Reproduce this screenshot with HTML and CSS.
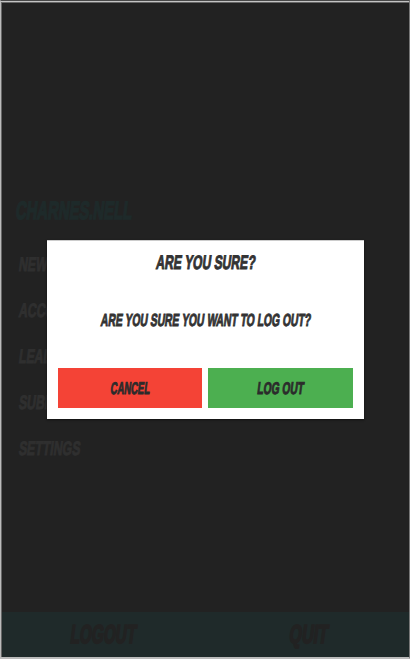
FILE: index.html
```
<!DOCTYPE html>
<html lang="en">
<head>
<meta charset="utf-8">
<title>Log out</title>
<link rel="stylesheet" href="styles.css">
</head>
<body>
<div class="window">
  <main class="menu">
    <h1 class="user"><span class="t t-user">CHARNES.NELL</span></h1>
    <ul class="items">
      <li><span class="t t-item">NEW GAME</span></li>
      <li><span class="t t-item">ACCOUNT</span></li>
      <li><span class="t t-item">LEADERS</span></li>
      <li><span class="t t-item">SUBMIT</span></li>
      <li><span class="t t-item">SETTINGS</span></li>
    </ul>
  </main>
  <footer class="bar">
    <div class="action"><span class="t t-logout">LOGOUT</span></div>
    <div class="action"><span class="t t-quit">QUIT</span></div>
  </footer>
</div>
<div class="dialog" role="dialog">
  <h2 class="title"><span class="t t-title">ARE YOU SURE?</span></h2>
  <p class="message"><span class="t t-message">ARE YOU SURE YOU WANT TO LOG OUT?</span></p>
  <div class="buttons">
    <button class="btn cancel"><span class="t t-cancel">CANCEL</span></button>
    <button class="btn confirm"><span class="t t-confirm">LOG OUT</span></button>
  </div>
</div>
</body>
</html>
```
FILE: styles.css
```
* { box-sizing: border-box; margin: 0; padding: 0; }
body {
  width: 410px;
  height: 659px;
  overflow: hidden;
  background: #222;
  font-family: "Liberation Sans", sans-serif;
  font-weight: 700;
}
.window {
  height: 659px;
  display: flex;
  flex-direction: column;
  border: solid;
  border-width: 1px 1px 2px 1px;
  border-color: #484848 #777 #bbb #bbb;
  box-shadow: inset 0 1px #c4c4c4, inset 1px 0 #666, inset 0 2px #666;
}
.menu { flex: 1; padding: 194px 0 0 15px; }
.user { height: 31px; display: flex; align-items: center; color: #1e2a2a; }
.items { list-style: none; padding: 16px 0 0 3px; }
.items li { height: 46px; display: flex; align-items: center; color: #2f2f2f; }
.bar { height: 45px; margin-left: 1px; padding-bottom: 1px; display: flex; background: #1f2a2a; color: #222; }
.action { flex: 1; display: flex; align-items: center; justify-content: center; }
.dialog {
  position: absolute;
  left: 47px;
  top: 240px;
  width: 317px;
  height: 179px;
  padding: 0 11px 11px;
  display: flex;
  flex-direction: column;
  background: #fff;
  border-top: 1px solid #ccc;
  box-shadow: 0 1px 2px #111;
  color: #333;
}
.title { height: 43px; display: flex; align-items: center; justify-content: center; }
.message { height: 74px; display: flex; align-items: center; justify-content: center; }
.buttons { display: grid; grid-template-columns: 144px 145px; gap: 6px; height: 40px; margin-top: auto; }
.btn { min-width: 0; border: 0; display: flex; align-items: center; justify-content: center; font: inherit; color: #2b2b2b; }
.cancel { background: #f44336; }
.confirm { background: #4caf50; }
.t { display: block; flex: none; white-space: nowrap; line-height: 1; -webkit-text-stroke: 1px currentColor; }
.t-user { font-size: 25px; transform-origin: left; transform: scaleX(0.595) skewX(-12deg); -webkit-text-stroke-width: 1.6px; }
.t-item { font-size: 19.5px; transform-origin: left; transform: scaleX(0.63) skewX(-12deg); }
.t-logout { font-size: 26px; transform: scaleX(0.59) skewX(-12deg); -webkit-text-stroke-width: 1.8px; }
.t-quit { font-size: 26px; transform: translateX(2px) scaleX(0.62) skewX(-12deg); -webkit-text-stroke-width: 1.8px; }
.t-title { font-size: 19.5px; transform: scaleX(0.62) skewX(-12deg); }
.t-message { font-size: 17.5px; transform: scaleX(0.59) skewX(-12deg); }
.t-cancel { font-size: 17px; transform: scaleX(0.555) skewX(-12deg); }
.t-confirm { font-size: 17px; transform: scaleX(0.6) skewX(-12deg); }
```
